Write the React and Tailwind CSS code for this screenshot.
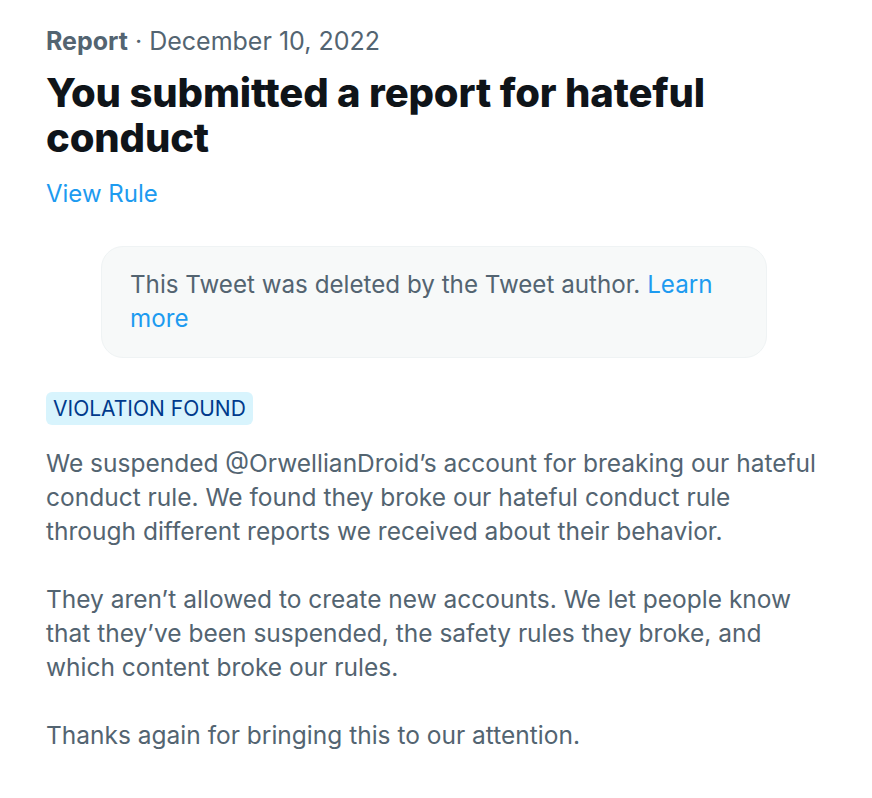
import React from 'react';

const App = () => {
  return (
    <div className="min-h-screen bg-white pt-[26px] px-[46px]" style={{ fontFamily: 'Inter, "Noto Sans", sans-serif' }}>
      {/* Header */}
      <div className="text-[25px] leading-[30px] text-[#536471]">
        <span className="font-bold">Report</span> · December 10, 2022
      </div>
      <h1 className="mt-[14px] text-[40px] leading-[45px] font-extrabold text-[#0f1419] tracking-[-0.15px]">
        You submitted a report for hateful<br />conduct
      </h1>
      <a href="#" className="block mt-[19px] text-[24px] leading-[30px] text-[#1d9bf0]">View Rule</a>

      {/* Deleted tweet box */}
      <div className="mt-[37px] ml-[55px] w-[666px] rounded-[22px] border border-[#eff3f4] bg-[#f7f9f9] px-[28px] py-[21px]">
        <p className="text-[24.2px] leading-[34px] text-[#536471]">
          This Tweet was deleted by the Tweet author. <a href="#" className="text-[#1d9bf0]">Learn<br />more</a>
        </p>
      </div>

      {/* Status */}
      <div className="mt-[34px] inline-block rounded-[6px] bg-[#d8f4fd] px-[7px] text-[21px] leading-[33px] text-[#003a8c]">
        VIOLATION FOUND
      </div>

      <div className="mt-[21px] text-[24.5px] leading-[34px] text-[#536471] whitespace-nowrap">
        <p>
          We suspended @OrwellianDroid’s account for breaking our hateful<br />
          conduct rule. We found they broke our hateful conduct rule<br />
          through different reports we received about their behavior.
        </p>
        <p className="mt-[34px]">
          They aren’t allowed to create new accounts. We let people know<br />
          that they’ve been suspended, the safety rules they broke, and<br />
          which content broke our rules.
        </p>
        <p className="mt-[34px]">Thanks again for bringing this to our attention.</p>
      </div>
    </div>
  );
};

export default App;
